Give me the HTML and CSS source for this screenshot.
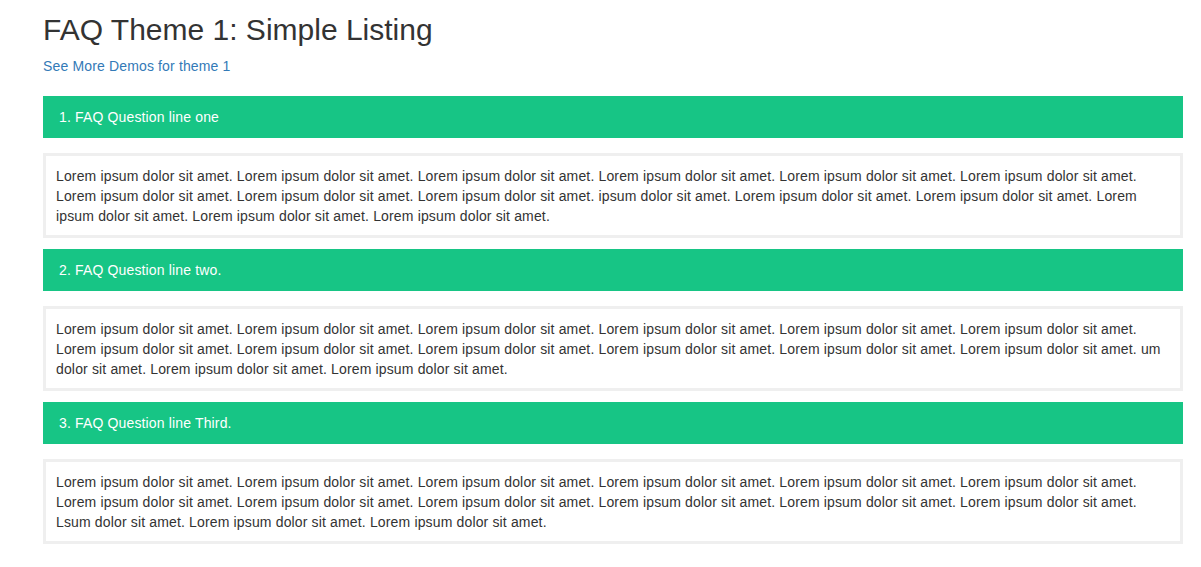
FILE: index.html
```html
<!DOCTYPE html>
<html>
<head>
<meta charset="utf-8">
<link rel="stylesheet" href="styles.css">
</head>
<body>
<div class="container">
  <h2 class="title">FAQ Theme 1: Simple Listing</h2>
  <a class="demo-link" href="#">See More Demos for theme 1</a>
  <div class="faq-list">
    <div class="faq-item">
      <div class="faq-q">1. FAQ Question line one</div>
      <div class="faq-a">Lorem ipsum dolor sit amet. Lorem ipsum dolor sit amet. Lorem ipsum dolor sit amet. Lorem ipsum dolor sit amet. Lorem ipsum dolor sit amet. Lorem ipsum dolor sit amet. Lorem ipsum dolor sit amet. Lorem ipsum dolor sit amet. Lorem ipsum dolor sit amet. ipsum dolor sit amet. Lorem ipsum dolor sit amet. Lorem ipsum dolor sit amet. Lorem ipsum dolor sit amet. Lorem ipsum dolor sit amet. Lorem ipsum dolor sit amet.</div>
    </div>
    <div class="faq-item">
      <div class="faq-q">2. FAQ Question line two.</div>
      <div class="faq-a">Lorem ipsum dolor sit amet. Lorem ipsum dolor sit amet. Lorem ipsum dolor sit amet. Lorem ipsum dolor sit amet. Lorem ipsum dolor sit amet. Lorem ipsum dolor sit amet. Lorem ipsum dolor sit amet. Lorem ipsum dolor sit amet. Lorem ipsum dolor sit amet. Lorem ipsum dolor sit amet. Lorem ipsum dolor sit amet. Lorem ipsum dolor sit amet. um dolor sit amet. Lorem ipsum dolor sit amet. Lorem ipsum dolor sit amet.</div>
    </div>
    <div class="faq-item">
      <div class="faq-q">3. FAQ Question line Third.</div>
      <div class="faq-a">Lorem ipsum dolor sit amet. Lorem ipsum dolor sit amet. Lorem ipsum dolor sit amet. Lorem ipsum dolor sit amet. Lorem ipsum dolor sit amet. Lorem ipsum dolor sit amet. Lorem ipsum dolor sit amet. Lorem ipsum dolor sit amet. Lorem ipsum dolor sit amet. Lorem ipsum dolor sit amet. Lorem ipsum dolor sit amet. Lorem ipsum dolor sit amet. Lsum dolor sit amet. Lorem ipsum dolor sit amet. Lorem ipsum dolor sit amet.</div>
    </div>
  </div>
</div>
</body>
</html>
```
FILE: styles.css
```css
html, body {
  margin: 0;
  padding: 0;
  background: #fff;
}
body {
  font-family: "Liberation Sans", Arial, Helvetica, sans-serif;
  font-size: 14px;
  line-height: 20px;
  color: #333;
  letter-spacing: 0.15px;
}
.container {
  width: 1140px;
  margin-left: 43px;
}
.title {
  margin: 0;
  padding-top: 12px;
  font-size: 30px;
  line-height: 36px;
  font-weight: normal;
  color: #333;
  letter-spacing: 0;
}
.demo-link {
  display: block;
  margin-top: 8px;
  color: #337ab7;
  text-decoration: none;
}
.faq-list {
  margin-top: 20px;
  display: flex;
  flex-direction: column;
  gap: 11px;
}
.faq-item {
  display: flex;
  flex-direction: column;
  gap: 15px;
}
.faq-q {
  background: #17c585;
  color: #fff;
  height: 42px;
  line-height: 42px;
  padding-left: 16px;
}
.faq-a {
  border: 3px solid #efefef;
  padding: 10px 10px 9px 10px;
}
```
